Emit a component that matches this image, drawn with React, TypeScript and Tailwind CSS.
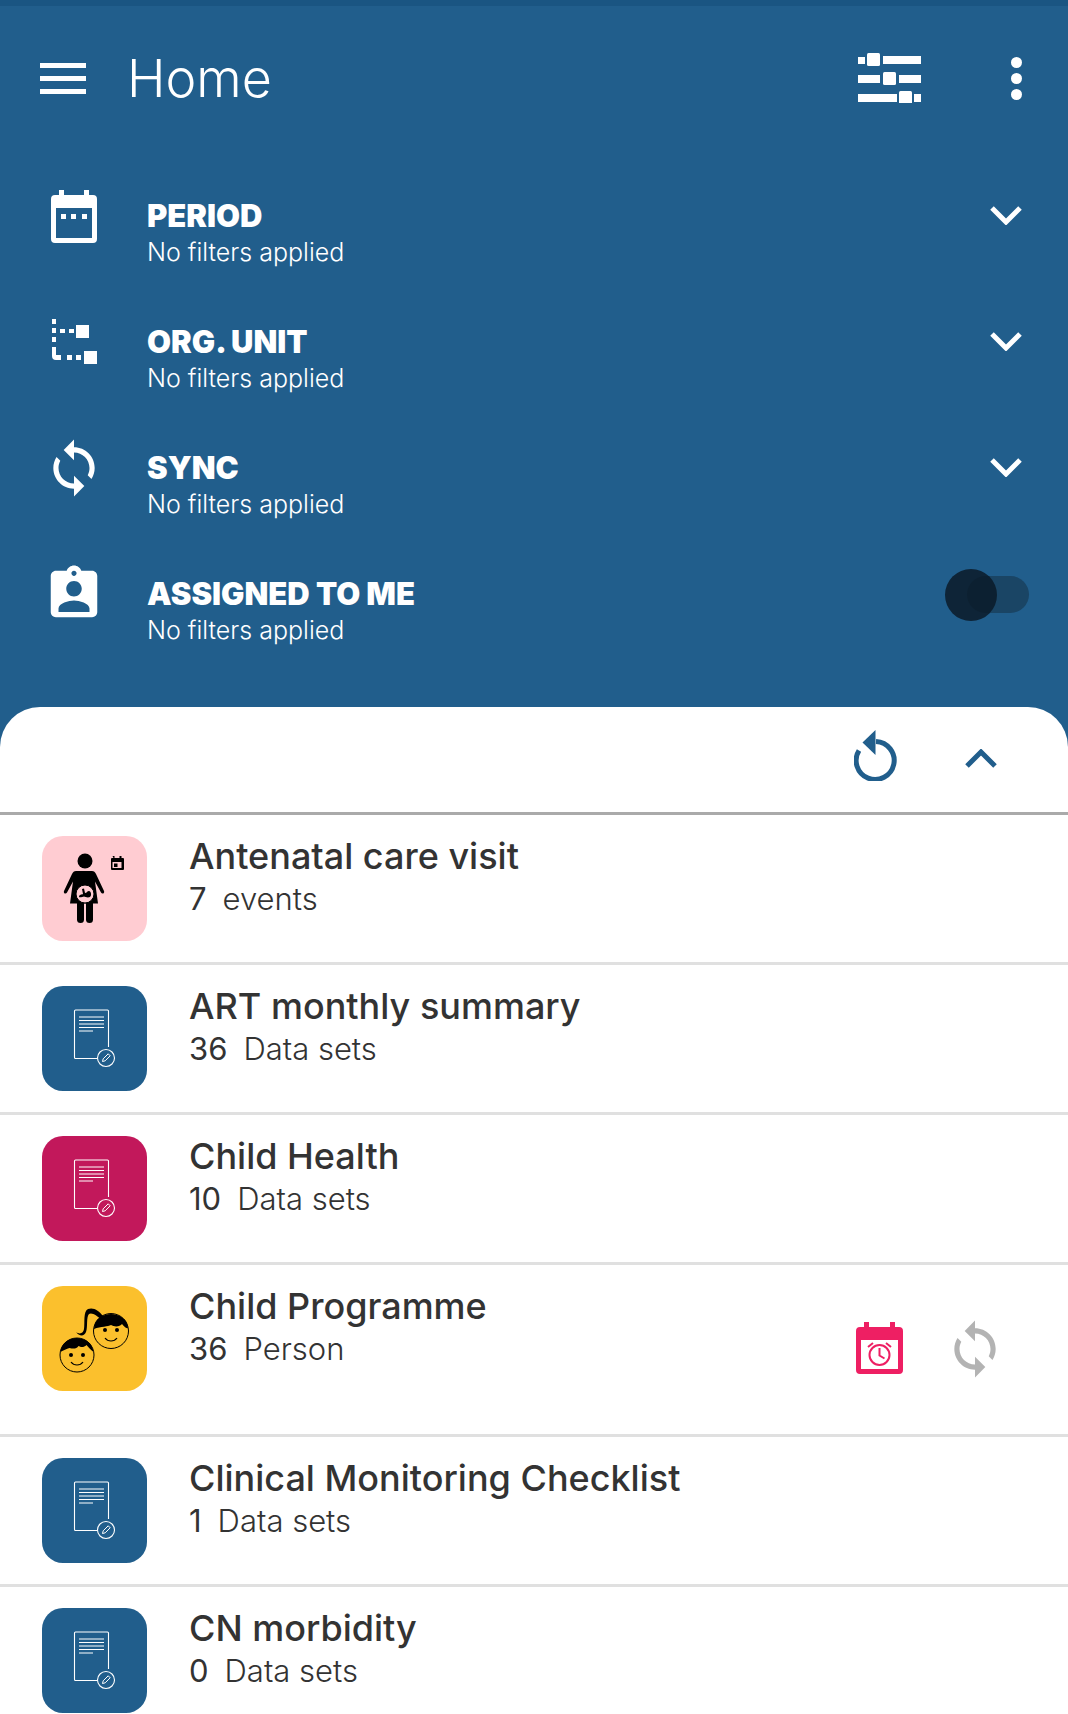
const SYNC_PATH =
  "M12 4V1L8 5l4 4V6c3.31 0 6 2.69 6 6 0 1.01-.25 1.97-.7 2.8l1.46 1.46C19.54 15.03 20 13.57 20 12c0-4.42-3.58-8-8-8zm0 14c-3.31 0-6-2.69-6-6 0-1.01.25-1.97.7-2.8L5.24 7.74C4.46 8.97 4 10.43 4 12c0 4.42 3.58 8 8 8v3l4-4-4-4v3z";

function MenuIcon() {
  return (
    <svg width="46" height="31" viewBox="0 0 46 31" fill="#fff">
      <rect y="0" width="46" height="5" />
      <rect y="13" width="46" height="5" />
      <rect y="26" width="46" height="5" />
    </svg>
  );
}

function SlidersIcon() {
  return (
    <svg width="63" height="50" viewBox="0 0 63 50" fill="#fff">
      <rect x="0" y="4" width="7" height="7" />
      <rect x="9" y="0" width="13" height="13" rx="1.5" />
      <rect x="25" y="3" width="38" height="8" />
      <rect x="0" y="22" width="22" height="8" />
      <rect x="25" y="19" width="13" height="13" rx="1.5" />
      <rect x="41" y="22" width="22" height="8" />
      <rect x="0" y="41" width="39" height="8" />
      <rect x="41" y="38" width="13" height="13" rx="1.5" />
      <rect x="56" y="41" width="7" height="8" />
    </svg>
  );
}

function DotsIcon() {
  return (
    <svg width="11" height="43" viewBox="0 0 11 43" fill="#fff">
      <circle cx="5.5" cy="5.5" r="5.5" />
      <circle cx="5.5" cy="21.5" r="5.5" />
      <circle cx="5.5" cy="37.5" r="5.5" />
    </svg>
  );
}

function Chevron({ up, color }: { up?: boolean; color: string }) {
  return (
    <svg width="32" height="20" viewBox="0 0 32 20" fill="none">
      <path d={up ? "M2 17L16 3l14 14" : "M2 3l14 14L30 3"} stroke={color} strokeWidth="5" />
    </svg>
  );
}

function CalendarIcon() {
  return (
    <svg width="46" height="53" viewBox="0 0 46 53" fill="#fff">
      <path
        fillRule="evenodd"
        d="M8 0h5v5h20V0h5v5h4a4 4 0 0 1 4 4v40a4 4 0 0 1-4 4H4a4 4 0 0 1-4-4V9a4 4 0 0 1 4-4h4zM5 18v30h36V18z"
      />
      <rect x="10" y="24" width="5" height="5" />
      <rect x="20" y="24" width="5" height="5" />
      <rect x="31" y="24" width="5" height="5" />
    </svg>
  );
}

function OrgIcon() {
  return (
    <svg width="46" height="46" viewBox="0 0 46 46" fill="#fff">
      <rect x="1" y="0" width="4" height="5" />
      <rect x="1" y="9" width="4" height="5" />
      <rect x="1" y="18" width="4" height="5" />
      <rect x="9" y="10" width="5" height="4" />
      <rect x="18" y="10" width="5" height="4" />
      <rect x="25" y="6" width="13" height="13" />
      <path d="M1 28h4v8h5v5H5a4 4 0 0 1-4-4z" />
      <rect x="16" y="36" width="5" height="5" />
      <rect x="25" y="36" width="5" height="5" />
      <rect x="33" y="32" width="13" height="13" />
    </svg>
  );
}

function SyncIcon({ color }: { color: string }) {
  return (
    <svg width="62" height="62" viewBox="0 0 24 24" fill={color}>
      <path d={SYNC_PATH} />
    </svg>
  );
}

function AssignIcon() {
  return (
    <svg width="62" height="62" viewBox="0 0 24 24" fill="#fff">
      <path d="M19 3h-4.18C14.4 1.84 13.3 1 12 1c-1.3 0-2.4.84-2.82 2H5c-1.1 0-2 .9-2 2v14c0 1.1.9 2 2 2h14c1.1 0 2-.9 2-2V5c0-1.1-.9-2-2-2zm-7 0c.55 0 1 .45 1 1s-.45 1-1 1-1-.45-1-1 .45-1 1-1zm0 4c1.66 0 3 1.34 3 3s-1.34 3-3 3-3-1.34-3-3 1.34-3 3-3zm6 12H6v-1.4c0-2 4-3.1 6-3.1s6 1.1 6 3.1V19z" />
    </svg>
  );
}

function ReplayIcon() {
  return (
    <svg width="44" height="51" viewBox="0 0 44 51" fill="none">
      <path d="M5 20.5a19 19 0 1 0 17-9" stroke="#215e8c" strokeWidth="5" />
      <path d="M8.500 12.500L21.500 0v25z" fill="#215e8c" />
    </svg>
  );
}

function DocIcon() {
  return (
    <svg width="105" height="105" viewBox="0 0 105 105" fill="none" stroke="#fff">
      <path d="M55 72.500H33.500a1 1 0 0 1-1-1V25a1 1 0 0 1 1-1h32a1 1 0 0 1 1 1v36" strokeWidth="1.100" />
      <path d="M37 31h25M37 34.500h25M37 38h25M37 41.500h25M37 45h14" strokeWidth="1" />
      <circle cx="64" cy="72" r="8.500" strokeWidth="1.100" />
      <path d="M60.500 75.500l.7-2.700 5-5 2 2-5 5z" strokeWidth="1" />
    </svg>
  );
}

function MotherIcon() {
  return (
    <svg width="105" height="105" viewBox="0 0 105 105" fill="#000">
      <circle cx="43" cy="25" r="7.500" />
      <path d="M36 35h14c2 0 3 1 4 3l8 17c1 2.500-2 3.500-3 1.500l-6-11 3 22H28l3-22-6 11c-1 2-4 1-3-1.500l8-17c1-2 2-3 4-3z" />
      <rect x="35" y="64" width="7" height="23" rx="3.500" />
      <rect x="44" y="64" width="7" height="23" rx="3.500" />
      <circle cx="43" cy="58" r="9" fill="#ffccd2" stroke="#000" strokeWidth="1" />
      <path d="M37 61c0-3 3-2 4-3l-1-5 2-.5 1 4.500c2 0 2-2 4-2s3 4.500 1 6c-2 1-5 0-6-.5-1.500.8-5 1-5 .5z" />
      <path d="M70.500 20h2v2h5v-2h2v2h1.500a1 1 0 0 1 1 1v10a1 1 0 0 1-1 1h-11a1 1 0 0 1-1-1V23a1 1 0 0 1 1-1h1.500zM70.500 26v6h9v-6z" />
      <rect x="72" y="27.500" width="3.500" height="3.500" />
    </svg>
  );
}

function KidsIcon() {
  return (
    <svg width="105" height="105" viewBox="0 0 105 105" fill="none" stroke="#000">
      <circle cx="69" cy="45" r="17.500" strokeWidth="1" />
      <path d="M52 43c0-10 9-15 17-15s17 5 17 14c-2 1-4-2-6-4-2 3-8 3-11 1-3 2-10 1-17 4z" fill="#000" stroke="none" />
      <path d="M61 30c-4-5-9-9-15-7-5 2-3 14-4 20-.5 4-4 6-8 3 3 4 8 5 10 0 2-5 0-15 3-18 3-2 8 2 12 5z" fill="#000" stroke="none" />
      <circle cx="35" cy="69" r="17" strokeWidth="1" />
      <path d="M18.500 66c0-8 8-14 16-14 9 0 16 5 17 14-3-2-5-5-7-7-3 3-6 2-8 1-2 3-5 3-9 2-3 1-6 2-9 4z" fill="#000" stroke="none" />
      <circle cx="63" cy="44" r="2" fill="#000" stroke="none" />
      <circle cx="75" cy="44" r="2" fill="#000" stroke="none" />
      <path d="M63 52c3 4 9 4 12 0" strokeWidth="1.200" />
      <circle cx="29" cy="69" r="2" fill="#000" stroke="none" />
      <circle cx="41" cy="69" r="2" fill="#000" stroke="none" />
      <path d="M29 76c3 4 9 4 12 0" strokeWidth="1.200" />
    </svg>
  );
}

function AlarmCalendarIcon() {
  return (
    <svg width="47" height="52" viewBox="0 0 47 52" fill="none">
      <path
        fillRule="evenodd"
        d="M8 0h5v5h21V0h5v5h4a4 4 0 0 1 4 4v39a4 4 0 0 1-4 4H4a4 4 0 0 1-4-4V9a4 4 0 0 1 4-4h4zM5 18v29h37V18z"
        fill="#ee1f63"
      />
      <circle cx="23.500" cy="33" r="10" stroke="#ee1f63" strokeWidth="2" />
      <path d="M23.500 26v7.500l5 3M12 25l5-4M35 25l-5-4" stroke="#ee1f63" strokeWidth="2" />
    </svg>
  );
}

const filters = [
  { title: "PERIOD", icon: <CalendarIcon /> },
  { title: "ORG. UNIT", icon: <OrgIcon /> },
  { title: "SYNC", icon: <SyncIcon color="#fff" /> },
  { title: "ASSIGNED TO ME", icon: <AssignIcon />, toggle: true },
];

const programs = [
  { name: "Antenatal care visit", count: "7", unit: "events", bg: "bg-[#ffccd2]", icon: <MotherIcon /> },
  { name: "ART monthly summary", count: "36", unit: "Data sets", bg: "bg-[#215e8c]", icon: <DocIcon /> },
  { name: "Child Health", count: "10", unit: "Data sets", bg: "bg-[#c2185b]", icon: <DocIcon /> },
  { name: "Child Programme", count: "36", unit: "Person", bg: "bg-[#fbc02d]", icon: <KidsIcon />, tall: true },
  { name: "Clinical Monitoring Checklist", count: "1", unit: "Data sets", bg: "bg-[#215e8c]", icon: <DocIcon /> },
  { name: "CN morbidity", count: "0", unit: "Data sets", bg: "bg-[#215e8c]", icon: <DocIcon /> },
];

export default function App() {
  return (
    <div className="w-[1068px] h-[1714px] overflow-hidden bg-[#215e8c] font-['Inter',sans-serif]">
      <div className="h-[6px] bg-[#1a5582]" />

      <div className="h-[146px] flex items-center pl-[40px] pr-[46px] pb-[2px]">
        <MenuIcon />
        <span className="ml-[41px] mt-[2px] text-[52px] leading-none font-light text-white">Home</span>
        <div className="ml-auto flex items-center gap-[90px]">
          <SlidersIcon />
          <DotsIcon />
        </div>
      </div>

      <div className="h-[555px] pt-[25px]">
        {filters.map((f) => (
          <div key={f.title} className="h-[126px] flex pr-[46px]">
            <div className="w-[148px] flex justify-center">
              <div className="w-[62px] h-[62px] flex items-center justify-center mt-[8px]">{f.icon}</div>
            </div>
            <div className="pt-[21px] -ml-[1px]">
              <div className="text-[31px] leading-[36px] font-black text-white">{f.title}</div>
              <div className="text-[25px] leading-[36px] font-light text-white">No filters applied</div>
            </div>
            <div className="ml-auto pt-[28px]">
              {f.toggle ? (
                <div className="relative w-[62px] h-[37px] mt-[-7px] mr-[-7px] rounded-full bg-[#1a4565]">
                  <div className="absolute left-[-22px] top-[-7px] w-[52px] h-[52px] rounded-full bg-[#0a1a28]/85" />
                </div>
              ) : (
                <Chevron color="#fff" />
              )}
            </div>
          </div>
        ))}
      </div>

      <div className="bg-white rounded-t-[40px] h-[1007px]">
        <div className="h-[105px] flex items-start justify-end pr-[71px] border-b-[3px] border-[#aaaaaa] box-content">
          <div className="mt-[23px]"><ReplayIcon /></div>
          <div className="ml-[67px] mt-[42px]"><Chevron up color="#215e8c" /></div>
        </div>
        {programs.map((p) => (
          <div
            key={p.name}
            className={`flex pl-[42px] pt-[21px] border-b-[3px] border-[#e0e0e0] ${p.tall ? "h-[172px]" : "h-[150px]"}`}
          >
            <div className={`w-[105px] h-[105px] rounded-[21px] shrink-0 ${p.bg}`}>{p.icon}</div>
            <div className="ml-[42px] -mt-[2px]">
              <div className="text-[36px] leading-[44px] font-medium text-[#333333]">{p.name}</div>
              <div className="text-[31px] leading-[42px] font-light text-[#333333]">
                <span className="font-normal">{p.count}</span>
                <span className="ml-[16px]">{p.unit}</span>
              </div>
            </div>
            {p.tall && (
              <div className="ml-auto flex items-start pr-[72px] pt-[36px] gap-[51px]">
                <AlarmCalendarIcon />
                <div className="-mt-[4px] -mx-[10px]"><SyncIcon color="#b3b3b3" /></div>
              </div>
            )}
          </div>
        ))}
      </div>
    </div>
  );
}
